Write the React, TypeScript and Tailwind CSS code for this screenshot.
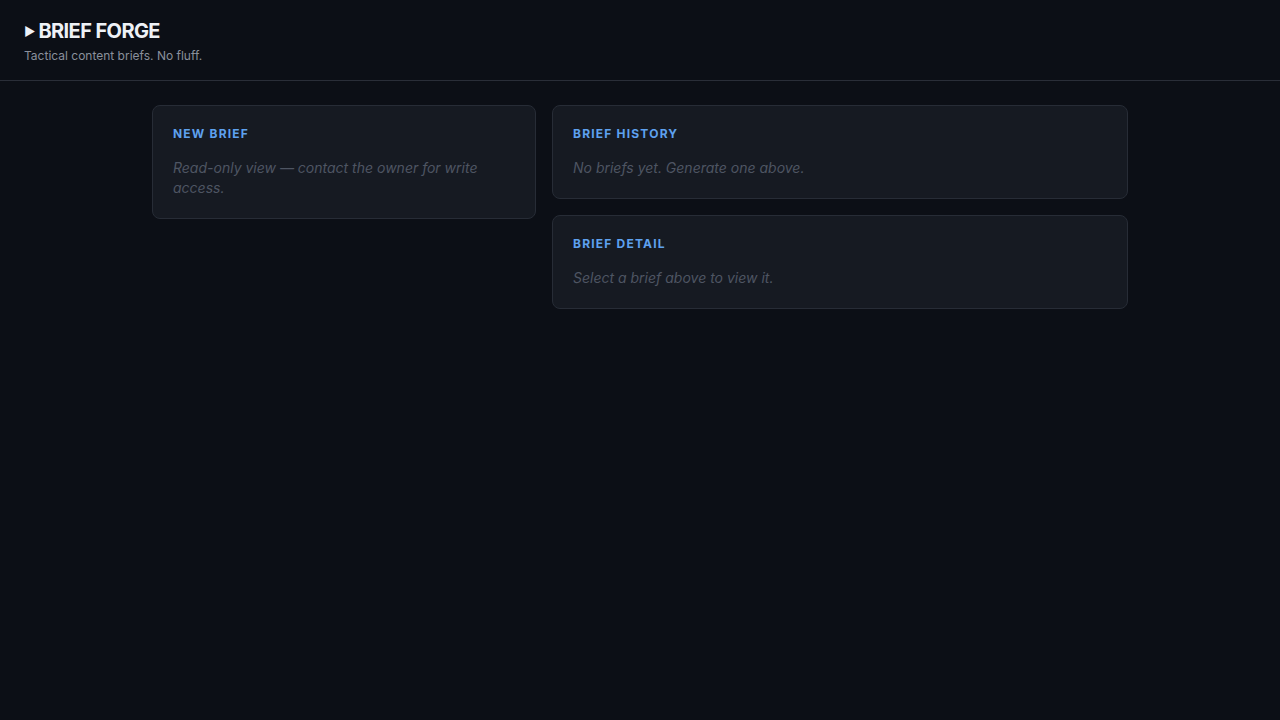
import React from "react";

function Card({ title, children }: { title: string; children: React.ReactNode }) {
  return (
    <section className="rounded-lg border border-[#272c36] bg-[#161a22] p-5">
      <h2 className="mb-4 text-xs font-bold leading-4 tracking-[0.1em] text-[#5ea1ef]">{title}</h2>
      <p className="text-sm italic leading-5 text-[#4e5562]">{children}</p>
    </section>
  );
}

export default function App() {
  return (
    <div
      className="min-h-screen bg-[#0c0f16] text-white"
      style={{ fontFamily: "Inter, 'Noto Sans', sans-serif" }}
    >
      <header className="border-b border-[#2a2e38] px-6 pt-[17px] pb-[15px]">
        <h1 className="flex items-center text-xl font-bold leading-7 tracking-[-0.03em] text-[#eef1f6]">
          <span className="mr-[3px] translate-y-[1px] text-[12px] tracking-normal">▶</span>BRIEF FORGE
        </h1>
        <p className="mt-[2px] text-xs leading-[18px] text-[#8a909c]">Tactical content briefs. No fluff.</p>
      </header>
      <main className="mx-auto grid max-w-[976px] grid-cols-[2fr_3fr] items-start gap-4 pt-6">
        <Card title="NEW BRIEF">Read-only view — contact the owner for write access.</Card>
        <div className="flex flex-col gap-4">
          <Card title="BRIEF HISTORY">No briefs yet. Generate one above.</Card>
          <Card title="BRIEF DETAIL">Select a brief above to view it.</Card>
        </div>
      </main>
    </div>
  );
}
